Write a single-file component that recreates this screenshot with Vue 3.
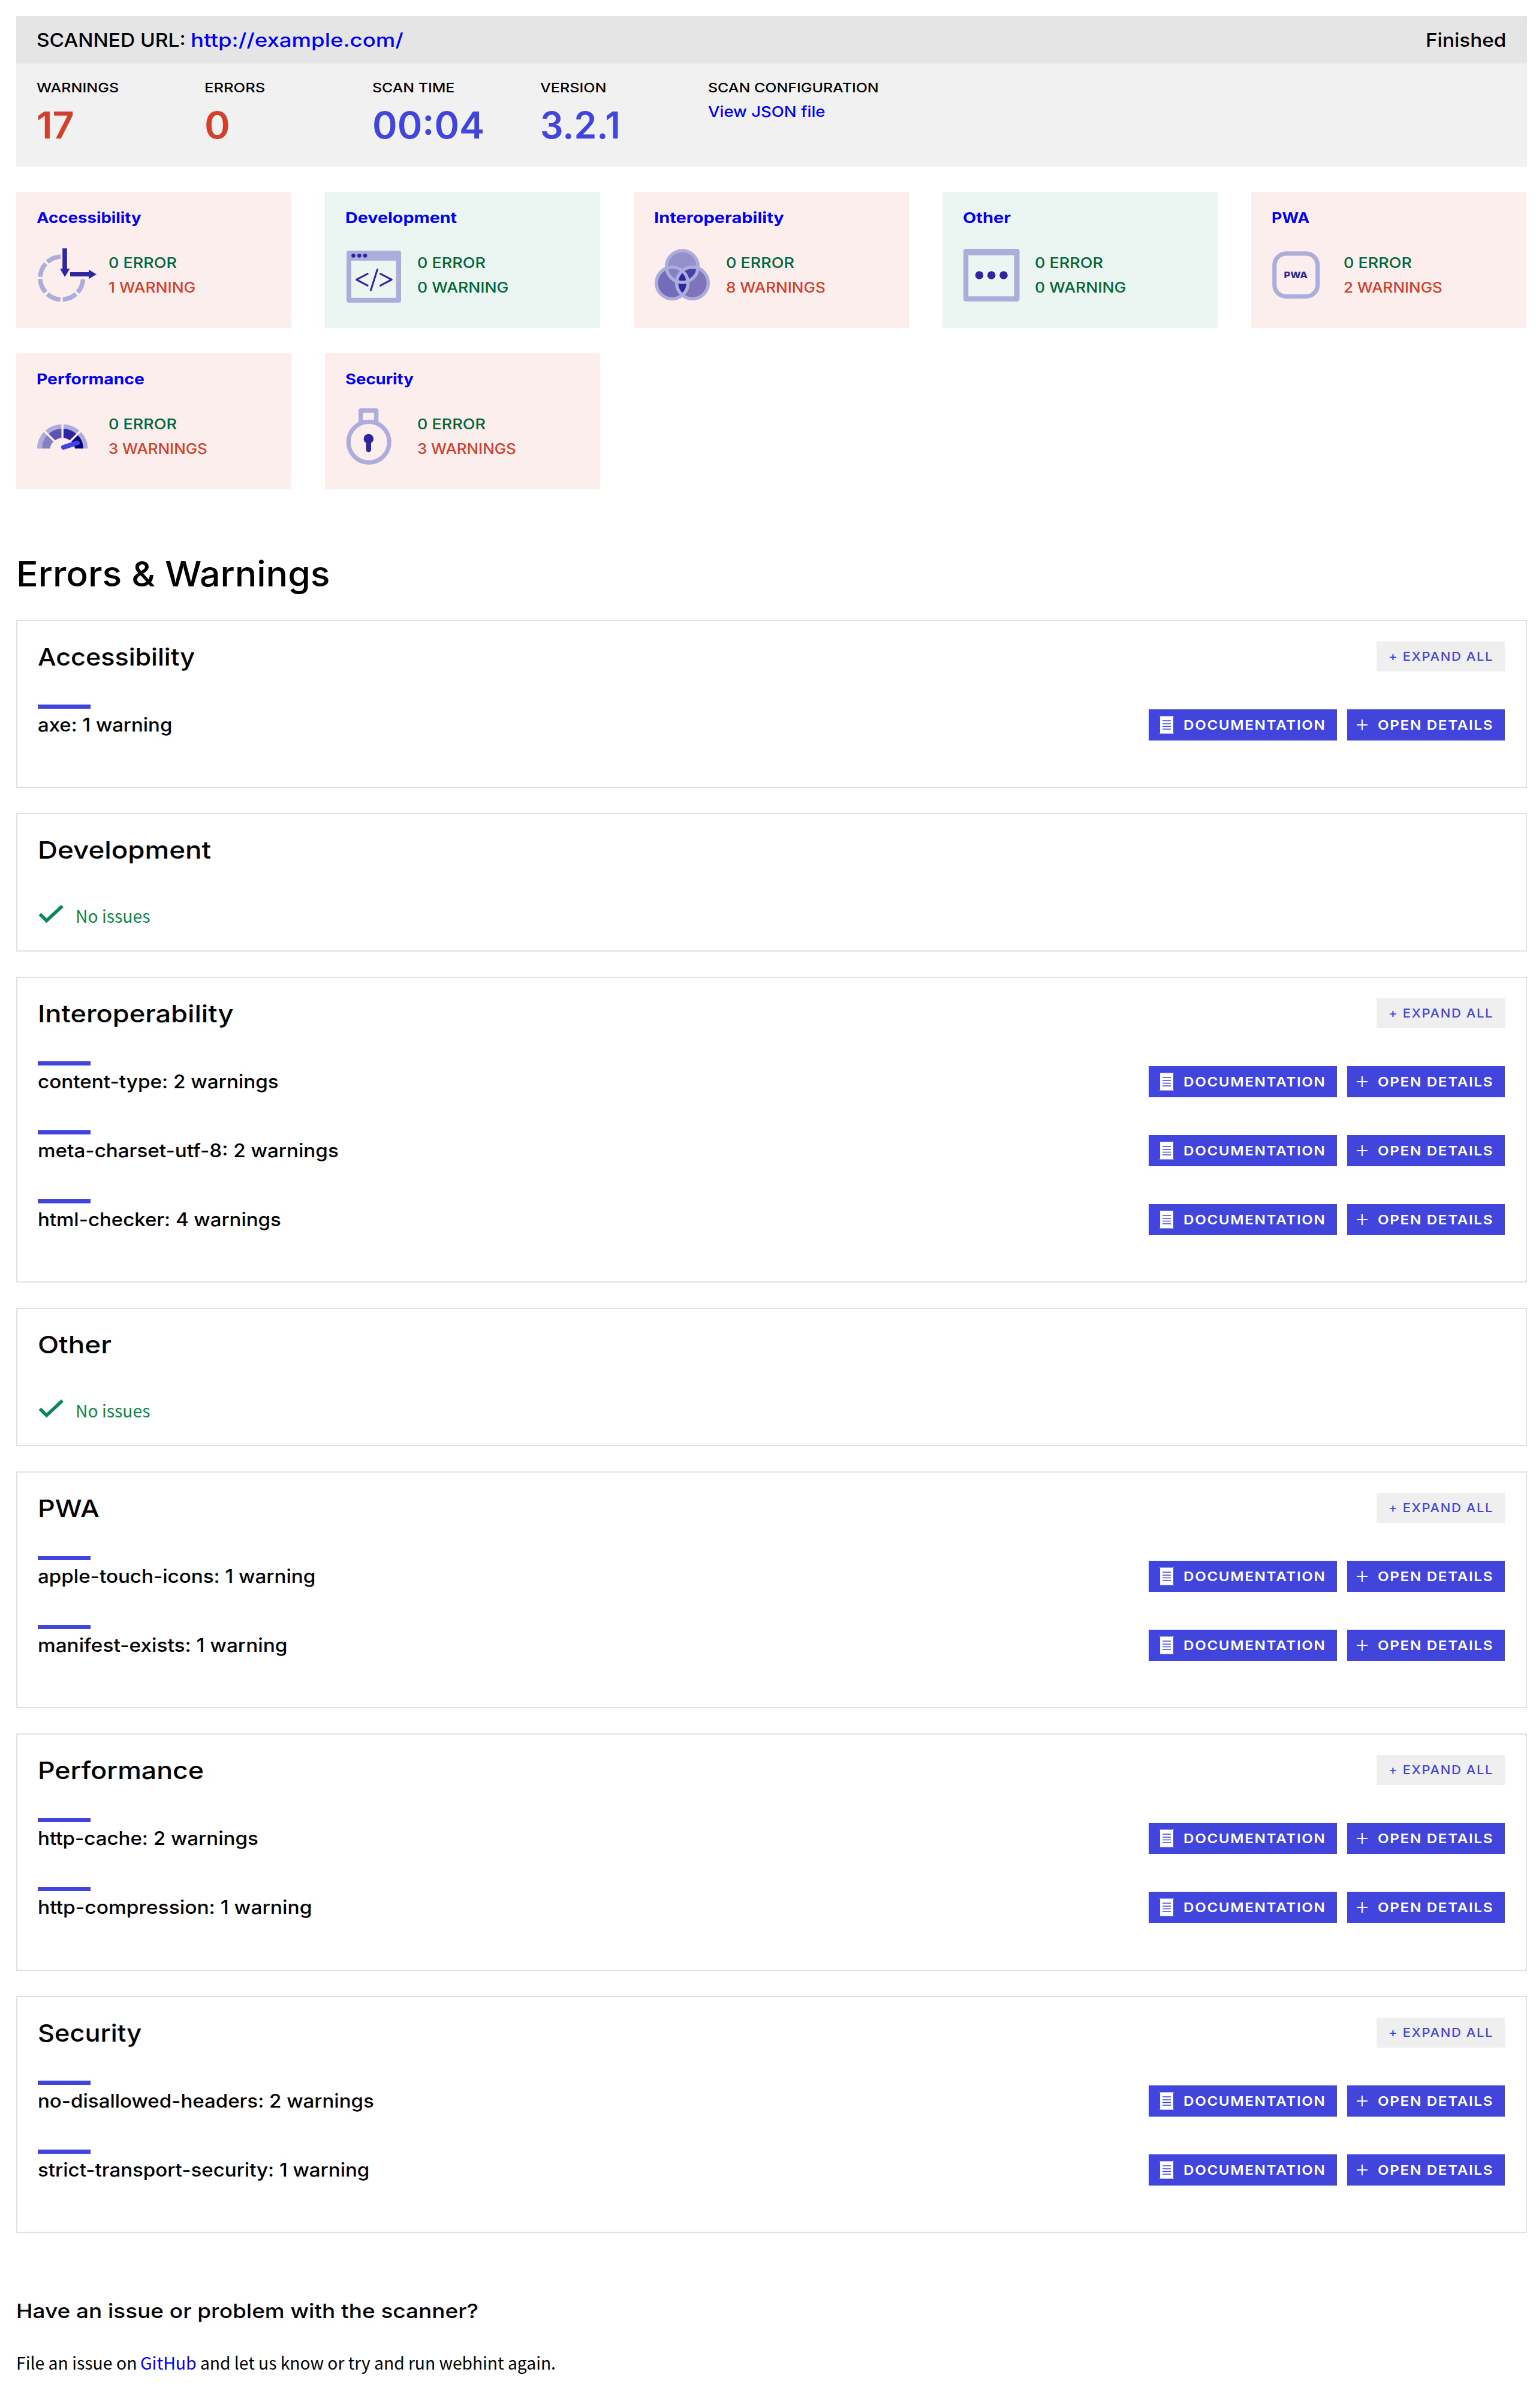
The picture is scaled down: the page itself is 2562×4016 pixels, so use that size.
<script setup>
// Stretches a run of text horizontally so its drawn width equals the given number of pixels.
const vFit = {
  mounted(el, { value }) {
    if (!value) return
    const style = getComputedStyle(el)
    const ctx = document.createElement('canvas').getContext('2d')
    ctx.font = `${style.fontWeight} ${style.fontSize} ${style.fontFamily}`
    if (style.letterSpacing !== 'normal') ctx.letterSpacing = style.letterSpacing
    const m = ctx.measureText(el.textContent.trim())
    const spacing = parseFloat(style.letterSpacing) || 0
    const ink = m.actualBoundingBoxLeft + m.actualBoundingBoxRight - (m.actualBoundingBoxRight > m.width - spacing + 0.5 ? spacing : 0)
    const k = value / ink
    const width = el.getBoundingClientRect().width
    el.style.transform = `scaleX(${k})`
    el.style.marginRight = `${width * (k - 1)}px`
  },
}

const stats = [
  { label: 'WARNINGS', lw: 136, value: '17', vw: 58, tone: 'red' },
  { label: 'ERRORS', lw: 99, value: '0', vw: 37, tone: 'red' },
  { label: 'SCAN TIME', lw: 135, value: '00:04', vw: 181, tone: 'blue' },
  { label: 'VERSION', lw: 109, value: '3.2.1', vw: 127, tone: 'blue' },
]

const cards = [
  { name: 'Accessibility', w: 175, icon: 'accessibility', warnings: '1 WARNING', ww: 143, failed: true },
  { name: 'Development', w: 185, icon: 'development', warnings: '0 WARNING', ww: 150, failed: false },
  { name: 'Interoperability', w: 216, icon: 'interoperability', warnings: '8 WARNINGS', ww: 164, failed: true },
  { name: 'Other', w: 79, icon: 'other', warnings: '0 WARNING', ww: 150, failed: false },
  { name: 'PWA', w: 62, icon: 'pwa', warnings: '2 WARNINGS', ww: 163, failed: true },
  { name: 'Performance', w: 178, icon: 'performance', warnings: '3 WARNINGS', ww: 163, failed: true },
  { name: 'Security', w: 113, icon: 'security', warnings: '3 WARNINGS', ww: 163, failed: true },
]

const sections = [
  { name: 'Accessibility', w: 262, hints: [{ text: 'axe: 1 warning', w: 221 }] },
  { name: 'Development', w: 285, hints: [] },
  {
    name: 'Interoperability',
    w: 323,
    hints: [
      { text: 'content-type: 2 warnings', w: 400 },
      { text: 'meta-charset-utf-8: 2 warnings', w: 499 },
      { text: 'html-checker: 4 warnings', w: 403 },
    ],
  },
  { name: 'Other', w: 120, hints: [] },
  {
    name: 'PWA',
    w: 99,
    hints: [
      { text: 'apple-touch-icons: 1 warning', w: 460 },
      { text: 'manifest-exists: 1 warning', w: 412 },
    ],
  },
  {
    name: 'Performance',
    w: 272,
    hints: [
      { text: 'http-cache: 2 warnings', w: 365 },
      { text: 'http-compression: 1 warning', w: 453 },
    ],
  },
  {
    name: 'Security',
    w: 171,
    hints: [
      { text: 'no-disallowed-headers: 2 warnings', w: 558 },
      { text: 'strict-transport-security: 1 warning', w: 550 },
    ],
  },
]
</script>

<template>
  <main class="page">
    <header class="summary">
      <div class="summary-bar">
        <p class="scanned"><span v-fit="245" class="fit">SCANNED URL:</span><a class="url"><span v-fit="352" class="fit">http://example.com/</span></a></p>
        <p class="status"><span v-fit="130" class="fit">Finished</span></p>
      </div>
      <div class="stats">
        <div v-for="s in stats" :key="s.label" class="stat">
          <div class="stat-label"><span v-fit="s.lw" class="fit">{{ s.label }}</span></div>
          <div class="stat-value" :class="s.tone"><span v-fit="s.vw" class="fit">{{ s.value }}</span></div>
        </div>
        <div class="stat">
          <div class="stat-label"><span v-fit="282" class="fit">SCAN CONFIGURATION</span></div>
          <a class="json"><span v-fit="195" class="fit">View JSON file</span></a>
        </div>
      </div>
    </header>

    <div class="cards">
      <article v-for="c in cards" :key="c.name" class="card" :class="{ failed: c.failed }">
        <h3 class="card-title"><span v-fit="c.w" class="fit">{{ c.name }}</span></h3>
        <div class="card-body">
          <svg class="card-icon" width="120" height="98" viewBox="0 0 120 98" fill="none">
            <template v-if="c.icon === 'accessibility'">
              <circle cx="41.8" cy="53.7" r="35.8" stroke="#adaddc" stroke-width="7.6" stroke-dasharray="24.1 4 24.1 4 24.1 4 24.1 4 24.1 4 24.1 60.5" stroke-dashoffset="-2" />
              <path fill="#2d26a0" d="M43.2 4.3h7.6V38h4.7l-8.3 14-8.2-14h4.2zM56 44h31v-4.3l13 7.8-13 7.8V51H56z" />
            </template>
            <template v-else-if="c.icon === 'development'">
              <path fill="#adaddc" fill-rule="evenodd" d="M6 8h83a4 4 0 0 1 4 4v78.700a4 4 0 0 1-4 4H6a4 4 0 0 1-4-4V12a4 4 0 0 1 4-4zM10 24.700v62h74.500v-62z" />
              <g fill="#2d26a0"><circle cx="13.500" cy="16.300" r="3.400" /><circle cx="23.300" cy="16.300" r="3.400" /><circle cx="33" cy="16.300" r="3.400" /></g>
              <path stroke="#2d26a0" stroke-width="3" stroke-linejoin="round" d="M38.300 46L18.500 56.300 38.300 66.800M57.300 46l20 10.300-20 10.500M53.800 38.300L42.200 75" />
            </template>
            <template v-else-if="c.icon === 'interoperability'">
              <defs>
                <clipPath id="venn-top"><circle cx="47" cy="34.500" r="26.400" /></clipPath>
                <clipPath id="venn-right"><circle cx="64" cy="62" r="26.400" /></clipPath>
              </defs>
              <circle cx="47" cy="34.500" r="26.400" fill="#9590cc" />
              <circle cx="30.200" cy="62" r="26.400" fill="#726dba" />
              <circle cx="64" cy="62" r="26.400" fill="#7f74b9" />
              <circle cx="30.200" cy="62" r="26.400" fill="#8480c4" clip-path="url(#venn-top)" />
              <circle cx="64" cy="62" r="26.400" fill="#4840a6" clip-path="url(#venn-top)" />
              <circle cx="30.200" cy="62" r="26.400" fill="#2d26a0" clip-path="url(#venn-right)" />
              <g stroke="#adaddc" stroke-width="5.500"><circle cx="47" cy="34.500" r="26.400" /><circle cx="30.200" cy="62" r="26.400" /><circle cx="64" cy="62" r="26.400" /></g>
            </template>
            <template v-else-if="c.icon === 'other'">
              <path fill="#adaddc" fill-rule="evenodd" d="M5 5h85.500a4 4 0 0 1 4 4v79.700a4 4 0 0 1-4 4H5a4 4 0 0 1-4-4V9a4 4 0 0 1 4-4zM9.300 15.700v68.600h76.200V15.700z" />
              <g fill="#2d26a0"><circle cx="27.500" cy="49" r="6.800" /><circle cx="47.700" cy="49" r="6.800" /><circle cx="68" cy="49" r="6.800" /></g>
            </template>
            <template v-else-if="c.icon === 'pwa'">
              <rect x="4.800" y="12.900" width="72" height="71.500" rx="19.500" stroke="#adaddc" stroke-width="7.200" />
              <text class="pwa-text" x="20.500" y="54.300" textLength="39.500" lengthAdjust="spacingAndGlyphs">PWA</text>
            </template>
            <template v-else-if="c.icon === 'performance'">
              <path fill="#adaddc" d="M.8 69a42.300 40.500 0 0 1 84.600 0z" />
              <path fill="#8480c4" d="M9.300 69A34 33 0 0 1 19 45.500L43.200 69z" />
              <path fill="#5b55b3" d="M19 45.500A34 33 0 0 1 43.200 36V69z" />
              <path fill="#2d26a0" d="M43.200 36A34 33 0 0 1 67.500 45.500L43.200 69z" />
              <path fill="#000080" d="M67.500 45.500A34 33 0 0 1 78 69H43.200z" />
              <path fill="#fdeeee" d="M22.300 69.500a21 20 0 0 1 41.800 0z" />
              <path stroke="#fdeeee" stroke-width="3.400" d="M43.200 69V27M43.200 70L12 38.800M43.200 70l31.200-31.200" />
              <path stroke="#4145dc" stroke-width="8" stroke-linecap="round" d="M45 67l23-7.500" />
            </template>
            <template v-else>
              <circle cx="39.200" cy="58.300" r="34" stroke="#adaddc" stroke-width="7.200" />
              <path stroke="#adaddc" stroke-width="7.400" stroke-linejoin="round" d="M25.700 26V5.700h25.900V26" />
              <path fill="#2d26a0" d="M38.800 44.800a8.100 8.100 0 0 1 4.200 15V71a4.200 4.200 0 0 1-8.400 0V59.800a8.100 8.100 0 0 1 4.200-15z" />
            </template>
          </svg>
          <div class="counts">
            <div class="count ok"><span v-fit="112" class="fit">0 ERROR</span></div>
            <div class="count" :class="c.failed ? 'bad' : 'ok'"><span v-fit="c.ww" class="fit">{{ c.warnings }}</span></div>
          </div>
        </div>
      </article>
    </div>

    <h1 class="title"><span v-fit="517" class="fit">Errors &amp; Warnings</span></h1>

    <section v-for="s in sections" :key="s.name" class="panel" :class="{ clean: !s.hints.length }">
      <div class="panel-head">
        <h2 class="panel-title"><span v-fit="s.w" class="fit">{{ s.name }}</span></h2>
        <button v-if="s.hints.length" class="expand"><span v-fit="172" class="fit">+ EXPAND ALL</span></button>
      </div>
      <div v-for="h in s.hints" :key="h.text" class="hint">
        <div class="hint-row">
          <p class="hint-text"><span v-fit="h.w" class="fit">{{ h.text }}</span></p>
          <div class="actions">
            <a class="action docs">
              <svg width="24" height="30" viewBox="0 0 24 30"><path fill="#fff" d="M1 1h22v28H1z" /><path stroke="#fff" stroke-opacity=".55" d="M0 .5h24M0 29.500h24" /><path stroke="#4145dc" stroke-width="1.300" d="M5 8h14M5 13h14M5 17.500h14M5 22h14" /></svg>
              <span v-fit="234" class="fit">DOCUMENTATION</span>
            </a>
            <button class="action details">
              <svg width="18" height="20" viewBox="0 0 18 20"><path stroke="#fff" stroke-width="2.200" d="M0 10h18M9 1v18" /></svg>
              <span v-fit="190" class="fit">OPEN DETAILS</span>
            </button>
          </div>
        </div>
      </div>
      <div v-if="!s.hints.length" class="no-issues">
        <svg width="44" height="34" viewBox="0 0 44 34" fill="none"><path stroke="#068850" stroke-width="5.600" d="M3.500 16.500l11.200 11L41 3" /></svg>
        <span v-fit="122" class="fit">No issues</span>
      </div>
    </section>

    <footer class="help">
      <h4 class="help-title"><span v-fit="767" class="fit">Have an issue or problem with the scanner?</span></h4>
      <p class="help-text">
        <span v-fit="198" class="fit">File an issue on</span>
        <a class="github"><span v-fit="92" class="fit">GitHub</span></a>
        <span v-fit="590" class="fit">and let us know or try and run webhint again.</span>
      </p>
    </footer>
  </main>
</template>

<style>
body {
  margin: 0;
  background: #fff;
}
</style>

<style scoped>
.page {
  box-sizing: border-box;
  width: 2562px;
  min-height: 4016px;
  padding: 27px 15px 0 27px;
  font-family: Inter, "Liberation Sans", sans-serif;
  font-weight: 450;
  color: #000;
}
h1, h2, h3, h4, p {
  margin: 0;
  font-weight: 450;
}
button {
  border: 0;
  font: inherit;
}
a {
  color: #0000ee;
}
.fit {
  display: inline-block;
  transform-origin: 0 50%;
  white-space: nowrap;
}
.summary {
  height: 251px;
  background: #f1f1f1;
}
.summary-bar {
  display: flex;
  justify-content: space-between;
  height: 79px;
  padding: 0 35px 0 34px;
  background: #e5e5e5;
  font-size: 30.8px;
  line-height: 80px;
}
.scanned {
  display: flex;
  gap: 8px;
}
.stats {
  display: flex;
  padding: 26px 0 0 34px;
}
.stat {
  width: 280px;
  white-space: nowrap;
}
.stat-label {
  font-size: 21.6px;
  line-height: 28px;
}
.stat-value {
  font-size: 61.4px;
  font-weight: 560;
  line-height: 98px;
}
.red {
  color: #d23f2b;
}
.blue {
  color: #4145dc;
}
.json {
  font-size: 24.6px;
  line-height: 52px;
}
.cards {
  display: grid;
  grid-template-columns: repeat(5, 459px);
  gap: 42px 56px;
  margin-top: 42px;
}
.card {
  box-sizing: border-box;
  height: 227px;
  padding: 25px 0 0 34px;
  background: #ebf5f1;
}
.card.failed {
  background: #fdeeee;
}
.card-title {
  font-size: 24.400px;
  font-weight: 650;
  line-height: 36px;
  color: #0000ee;
}
.card-body {
  display: flex;
  align-items: center;
  height: 82px;
  margin-top: 37px;
}
.card-icon {
  flex: none;
}
.pwa-text {
  font: 800 15px Inter, sans-serif;
  fill: #2d26a0;
}
.count {
  font-size: 24.200px;
  line-height: 41px;
}
.ok {
  color: #01663a;
}
.bad {
  color: #d23f2b;
}
.title {
  margin: 101px 0 37px;
  font-size: 58px;
  font-weight: 500;
  line-height: 80px;
}
.panel {
  padding: 34px 35px 22.300px 34px;
  border: 2px solid #e1e1e1;
}
.panel.clean {
  padding-bottom: 35.200px;
}
.panel + .panel {
  margin-top: 42px;
}
.panel-head {
  display: flex;
  justify-content: space-between;
  height: 50px;
  margin-bottom: 55px;
}
.panel-title {
  font-size: 40px;
  line-height: 51px;
}
.expand {
  width: 214px;
  padding: 0 0 0 20px;
  background: #efefef;
  color: #4145dc;
  font-size: 20px;
  line-height: 50px;
  letter-spacing: 1.500px;
  text-align: left;
}
.hint {
  height: 115px;
}
.hint::before {
  content: "";
  display: block;
  width: 88px;
  height: 7px;
  background: #4145dc;
}
.hint-row {
  display: flex;
  justify-content: space-between;
  padding-top: 1px;
}
.hint-text {
  font-size: 30.800px;
  line-height: 52px;
}
.actions {
  display: flex;
  gap: 17px;
}
.action {
  box-sizing: border-box;
  display: flex;
  align-items: center;
  height: 52px;
  background: #4145dc;
  color: #fff;
  font-size: 22px;
  font-weight: 560;
  letter-spacing: 1.500px;
}
.docs {
  width: 314px;
  gap: 16px;
  padding: 0 0 0 18px;
}
.details {
  width: 263px;
  gap: 17px;
  padding: 0 0 0 16px;
}
.no-issues {
  display: flex;
  gap: 19px;
  height: 46px;
  padding-top: 6.500px;
  color: #068850;
  font-family: "Noto Sans CJK JP", "Noto Sans", sans-serif;
  font-size: 28.650px;
  font-weight: 400;
  line-height: 46px;
}
.no-issues svg {
  margin-top: 4px;
}
.help {
  margin-top: 105px;
}
.help-title {
  font-size: 33.200px;
  line-height: 50px;
}
.help-text {
  display: flex;
  gap: 6px;
  margin-top: 38.500px;
  font-family: "Noto Sans CJK JP", "Noto Sans", sans-serif;
  font-size: 28.650px;
  font-weight: 400;
  line-height: 46px;
}
</style>
